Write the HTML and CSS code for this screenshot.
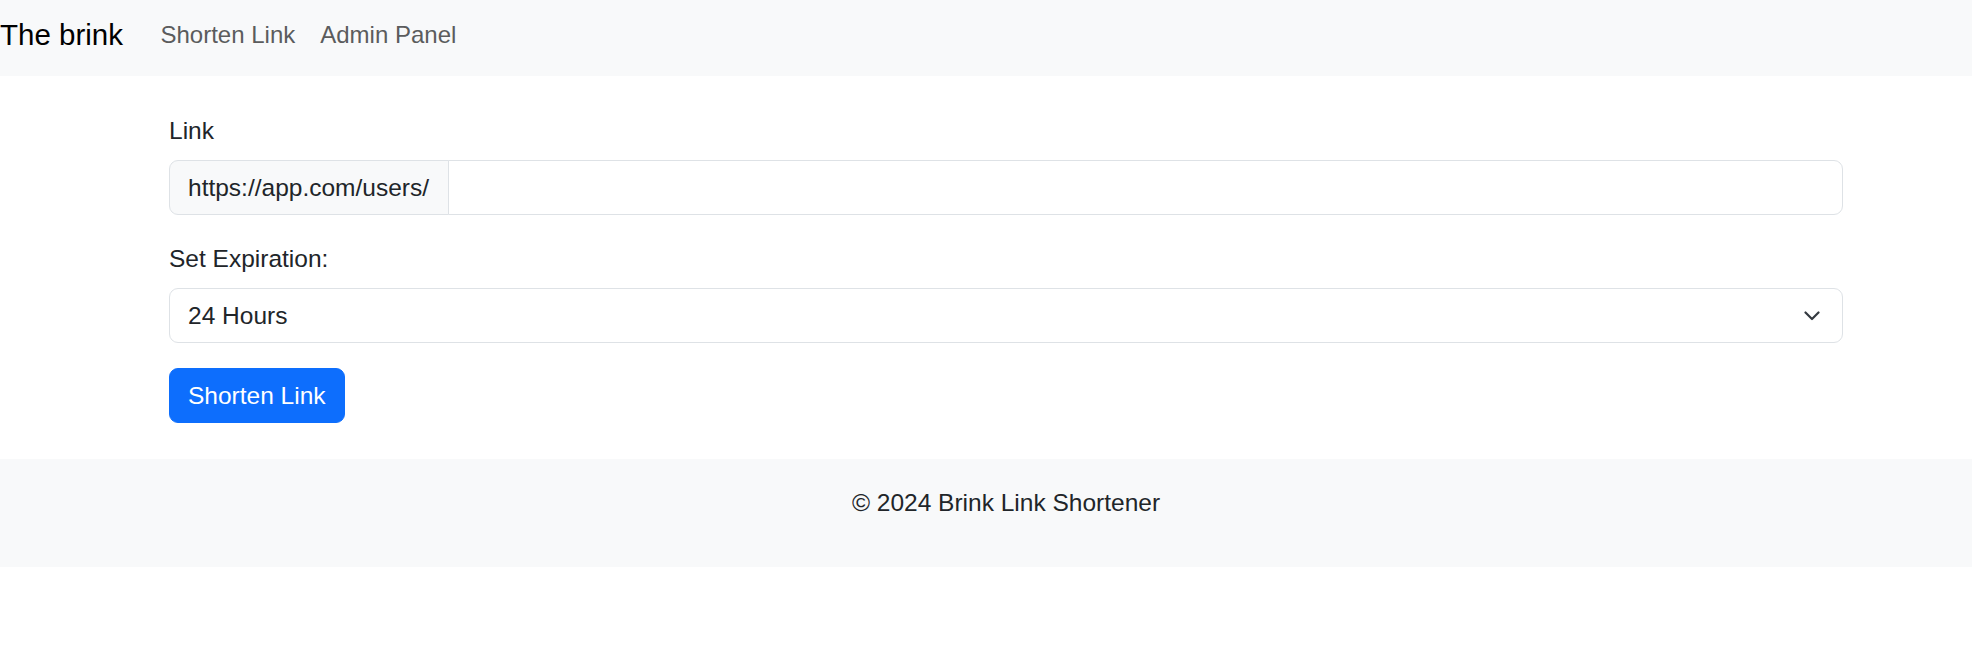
FILE: index.html
```html
<!DOCTYPE html>
<html lang="en">
<head>
<meta charset="utf-8">
<title>The brink</title>
<link rel="stylesheet" href="styles.css">
</head>
<body>
<nav class="navbar">
  <a class="brand" href="#">The brink</a>
  <ul class="nav">
    <li><a class="nav-link" href="#">Shorten Link</a></li>
    <li><a class="nav-link" href="#">Admin Panel</a></li>
  </ul>
</nav>
<main class="main">
  <form class="form">
    <div class="field">
      <label class="label" for="link">Link</label>
      <div class="input-group">
        <span class="input-prefix">https://app.com/users/</span>
        <input class="input" id="link" type="text">
      </div>
    </div>
    <div class="field">
      <label class="label" for="exp">Set Expiration:</label>
      <div class="select-wrap">
        <select class="select" id="exp">
          <option>24 Hours</option>
          <option>7 Days</option>
          <option>30 Days</option>
        </select>
        <svg class="chevron" width="16" height="10" viewBox="0 0 16 10"><polyline points="1.5,1.5 8,8 14.5,1.5" fill="none" stroke="#343a40" stroke-width="2.2" stroke-linecap="round" stroke-linejoin="round"/></svg>
      </div>
    </div>
    <button class="btn" type="button">Shorten Link</button>
  </form>
</main>
<footer class="footer">
  <p class="footer-text">&copy; 2024 Brink Link Shortener</p>
</footer>
</body>
</html>
```
FILE: styles.css
```css
* { box-sizing: border-box; }
html, body { margin: 0; padding: 0; background: #fff; }
body {
  font-family: "Liberation Sans", Arial, sans-serif;
  font-size: 24.5px;
  line-height: 37px;
  color: #212529;
}
.navbar {
  display: flex;
  align-items: flex-start;
  height: 76px;
  background: #f8f9fa;
}
.brand {
  display: block;
  margin-top: 17px;
  margin-right: 25px;
  font-size: 29.5px;
  line-height: 36px;
  color: #000;
  text-decoration: none;
}
.nav {
  display: flex;
  list-style: none;
  margin: 16px 0 0 0;
  padding: 0;
}
.nav-link {
  display: block;
  padding: 0 12.5px;
  font-size: 24px;
  color: #5b5c5d;
  text-decoration: none;
}
.main {
  padding: 36px 129px 36px 169px;
}
.form { display: flex; flex-direction: column; align-items: flex-start; }
.field { width: 100%; margin-bottom: 25px; }
.label { display: block; margin-bottom: 11px; }
.input-group { display: flex; width: 100%; }
.input-prefix {
  padding: 8px 19px 8px 18px;
  background: #f8f9fa;
  border: 1px solid #dee2e6;
  border-radius: 9px 0 0 9px;
  white-space: nowrap;
}
.input {
  flex: 1;
  margin-left: -1px;
  padding: 8px 18px;
  height: 55px;
  font: inherit;
  border: 1px solid #dee2e6;
  border-radius: 0 9px 9px 0;
  background: #fff;
}
.select-wrap { position: relative; width: 100%; }
.select {
  display: block;
  width: 100%;
  height: 55px;
  padding: 8px 18px;
  font: inherit;
  color: #212529;
  background: #fff;
  border: 1px solid #dee2e6;
  border-radius: 9px;
  -webkit-appearance: none;
  appearance: none;
}
.chevron {
  position: absolute;
  right: 23px;
  top: 23px;
}
.btn {
  padding: 8px 18px;
  height: 55px;
  font: inherit;
  color: #fff;
  background: #0d6efd;
  border: 1px solid #0d6efd;
  border-radius: 9px;
}
.footer {
  background: #f8f9fa;
  padding: 25px 129px 46px 169px;
  height: 108px;
}
.footer-text { margin: 0; text-align: center; }
```
